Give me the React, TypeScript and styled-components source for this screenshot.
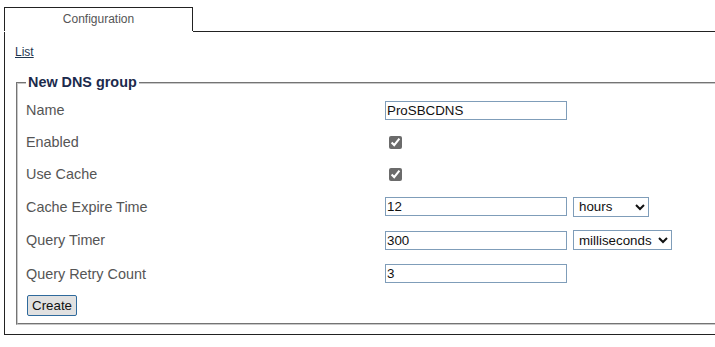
import React from "react";
import styled, { createGlobalStyle } from "styled-components";

const GlobalStyle = createGlobalStyle`
  html, body {
    margin: 0;
    padding: 0;
    background: #ffffff;
    overflow: hidden;
  }
  body {
    font-family: "Liberation Sans", Arial, sans-serif;
  }
`;

const Page = styled.div`
  padding: 7px 0 0 4px;
  width: 711px;
`;

const TabStrip = styled.div`
  display: flex;
  height: 25px;
`;

const Tab = styled.div`
  width: 189px;
  height: 24px;
  border: 1px solid #222;
  border-bottom: none;
  display: flex;
  justify-content: center;
  padding-top: 4px;
  box-sizing: border-box;
  font-size: 12px;
  color: #555;
`;

const TabFiller = styled.div`
  flex: 1;
  border-bottom: 1px solid #222;
  height: 24px;
`;

const Panel = styled.div`
  border-left: 1px solid #222;
  border-bottom: 1px solid #222;
  padding: 13px 0 9px 10px;
`;

const ListLink = styled.a`
  display: block;
  font-size: 12px;
  line-height: 14px;
  color: #1e3550;
  text-decoration: underline;
  cursor: pointer;
  width: fit-content;
`;

const Group = styled.fieldset`
  margin: 15px 0 0 1px;
  padding: 3px 8px 3px 8px;
  border: 2px groove #c8c8c8;
  border-right: none;
  min-width: 0;
`;

const Legend = styled.legend`
  padding: 0 2px;
  font-size: 14.4px;
  font-weight: bold;
  color: #1c2a4c;
  line-height: 17px;
`;

const FormTable = styled.table`
  border-collapse: collapse;
  border-spacing: 0;
`;

const Row = styled.tr<{ $h: number }>`
  height: ${(p) => p.$h}px;
`;

const LabelCell = styled.td`
  width: 359px;
  padding: 0;
  font-size: 14.4px;
  color: #555;
  vertical-align: middle;
`;

const FieldCell = styled.td`
  padding: 0;
  vertical-align: middle;
  white-space: nowrap;
`;

const TextInput = styled.input`
  width: 182px;
  height: 19px;
  box-sizing: border-box;
  border: 1px solid #7f9db9;
  padding: 0 1px;
  font-family: "Liberation Sans", Arial, sans-serif;
  font-size: 13.33px;
  color: #111;
  vertical-align: middle;
  outline: none;
`;

const Check = styled.input`
  margin: 0 0 0 4px;
  width: 13px;
  height: 13px;
  accent-color: #6b6b6b;
  vertical-align: middle;
`;

const Select = styled.select<{ $w: number }>`
  width: ${(p) => p.$w}px;
  height: 20px;
  margin-left: 6px;
  box-sizing: border-box;
  border: 1px solid #7f9db9;
  border-radius: 0;
  font-family: "Liberation Sans", Arial, sans-serif;
  font-size: 13.33px;
  color: #111;
  background: #fff;
  padding: 0 0 0 1px;
  vertical-align: middle;
`;

const CreateButton = styled.button`
  margin-left: 1px;
  height: 21px;
  padding: 0 4px;
  font-family: "Liberation Sans", Arial, sans-serif;
  font-size: 13.33px;
  color: #111;
  background: #e1e1e1;
  border: 1px solid #2f6a9c;
  border-radius: 2px;
  vertical-align: middle;
`;

export default function App() {
  return (
    <>
      <GlobalStyle />
      <Page>
        <TabStrip>
          <Tab>Configuration</Tab>
          <TabFiller />
        </TabStrip>
        <Panel>
          <ListLink>List</ListLink>
          <Group>
            <Legend>New DNS group</Legend>
            <FormTable>
              <tbody>
                <Row $h={32}>
                  <LabelCell>Name</LabelCell>
                  <FieldCell>
                    <TextInput defaultValue="ProSBCDNS" />
                  </FieldCell>
                </Row>
                <Row $h={32}>
                  <LabelCell>Enabled</LabelCell>
                  <FieldCell>
                    <Check type="checkbox" defaultChecked />
                  </FieldCell>
                </Row>
                <Row $h={32}>
                  <LabelCell>Use Cache</LabelCell>
                  <FieldCell>
                    <Check type="checkbox" defaultChecked />
                  </FieldCell>
                </Row>
                <Row $h={33}>
                  <LabelCell>Cache Expire Time</LabelCell>
                  <FieldCell>
                    <TextInput defaultValue="12" />
                    <Select $w={76} defaultValue="hours">
                      <option value="seconds">seconds</option>
                      <option value="minutes">minutes</option>
                      <option value="hours">hours</option>
                      <option value="days">days</option>
                    </Select>
                  </FieldCell>
                </Row>
                <Row $h={34}>
                  <LabelCell>Query Timer</LabelCell>
                  <FieldCell>
                    <TextInput defaultValue="300" />
                    <Select $w={99} defaultValue="milliseconds">
                      <option value="milliseconds">milliseconds</option>
                      <option value="seconds">seconds</option>
                    </Select>
                  </FieldCell>
                </Row>
                <Row $h={33}>
                  <LabelCell>Query Retry Count</LabelCell>
                  <FieldCell>
                    <TextInput defaultValue="3" />
                  </FieldCell>
                </Row>
                <Row $h={30}>
                  <LabelCell>
                    <CreateButton>Create</CreateButton>
                  </LabelCell>
                  <FieldCell />
                </Row>
              </tbody>
            </FormTable>
          </Group>
        </Panel>
      </Page>
    </>
  );
}
